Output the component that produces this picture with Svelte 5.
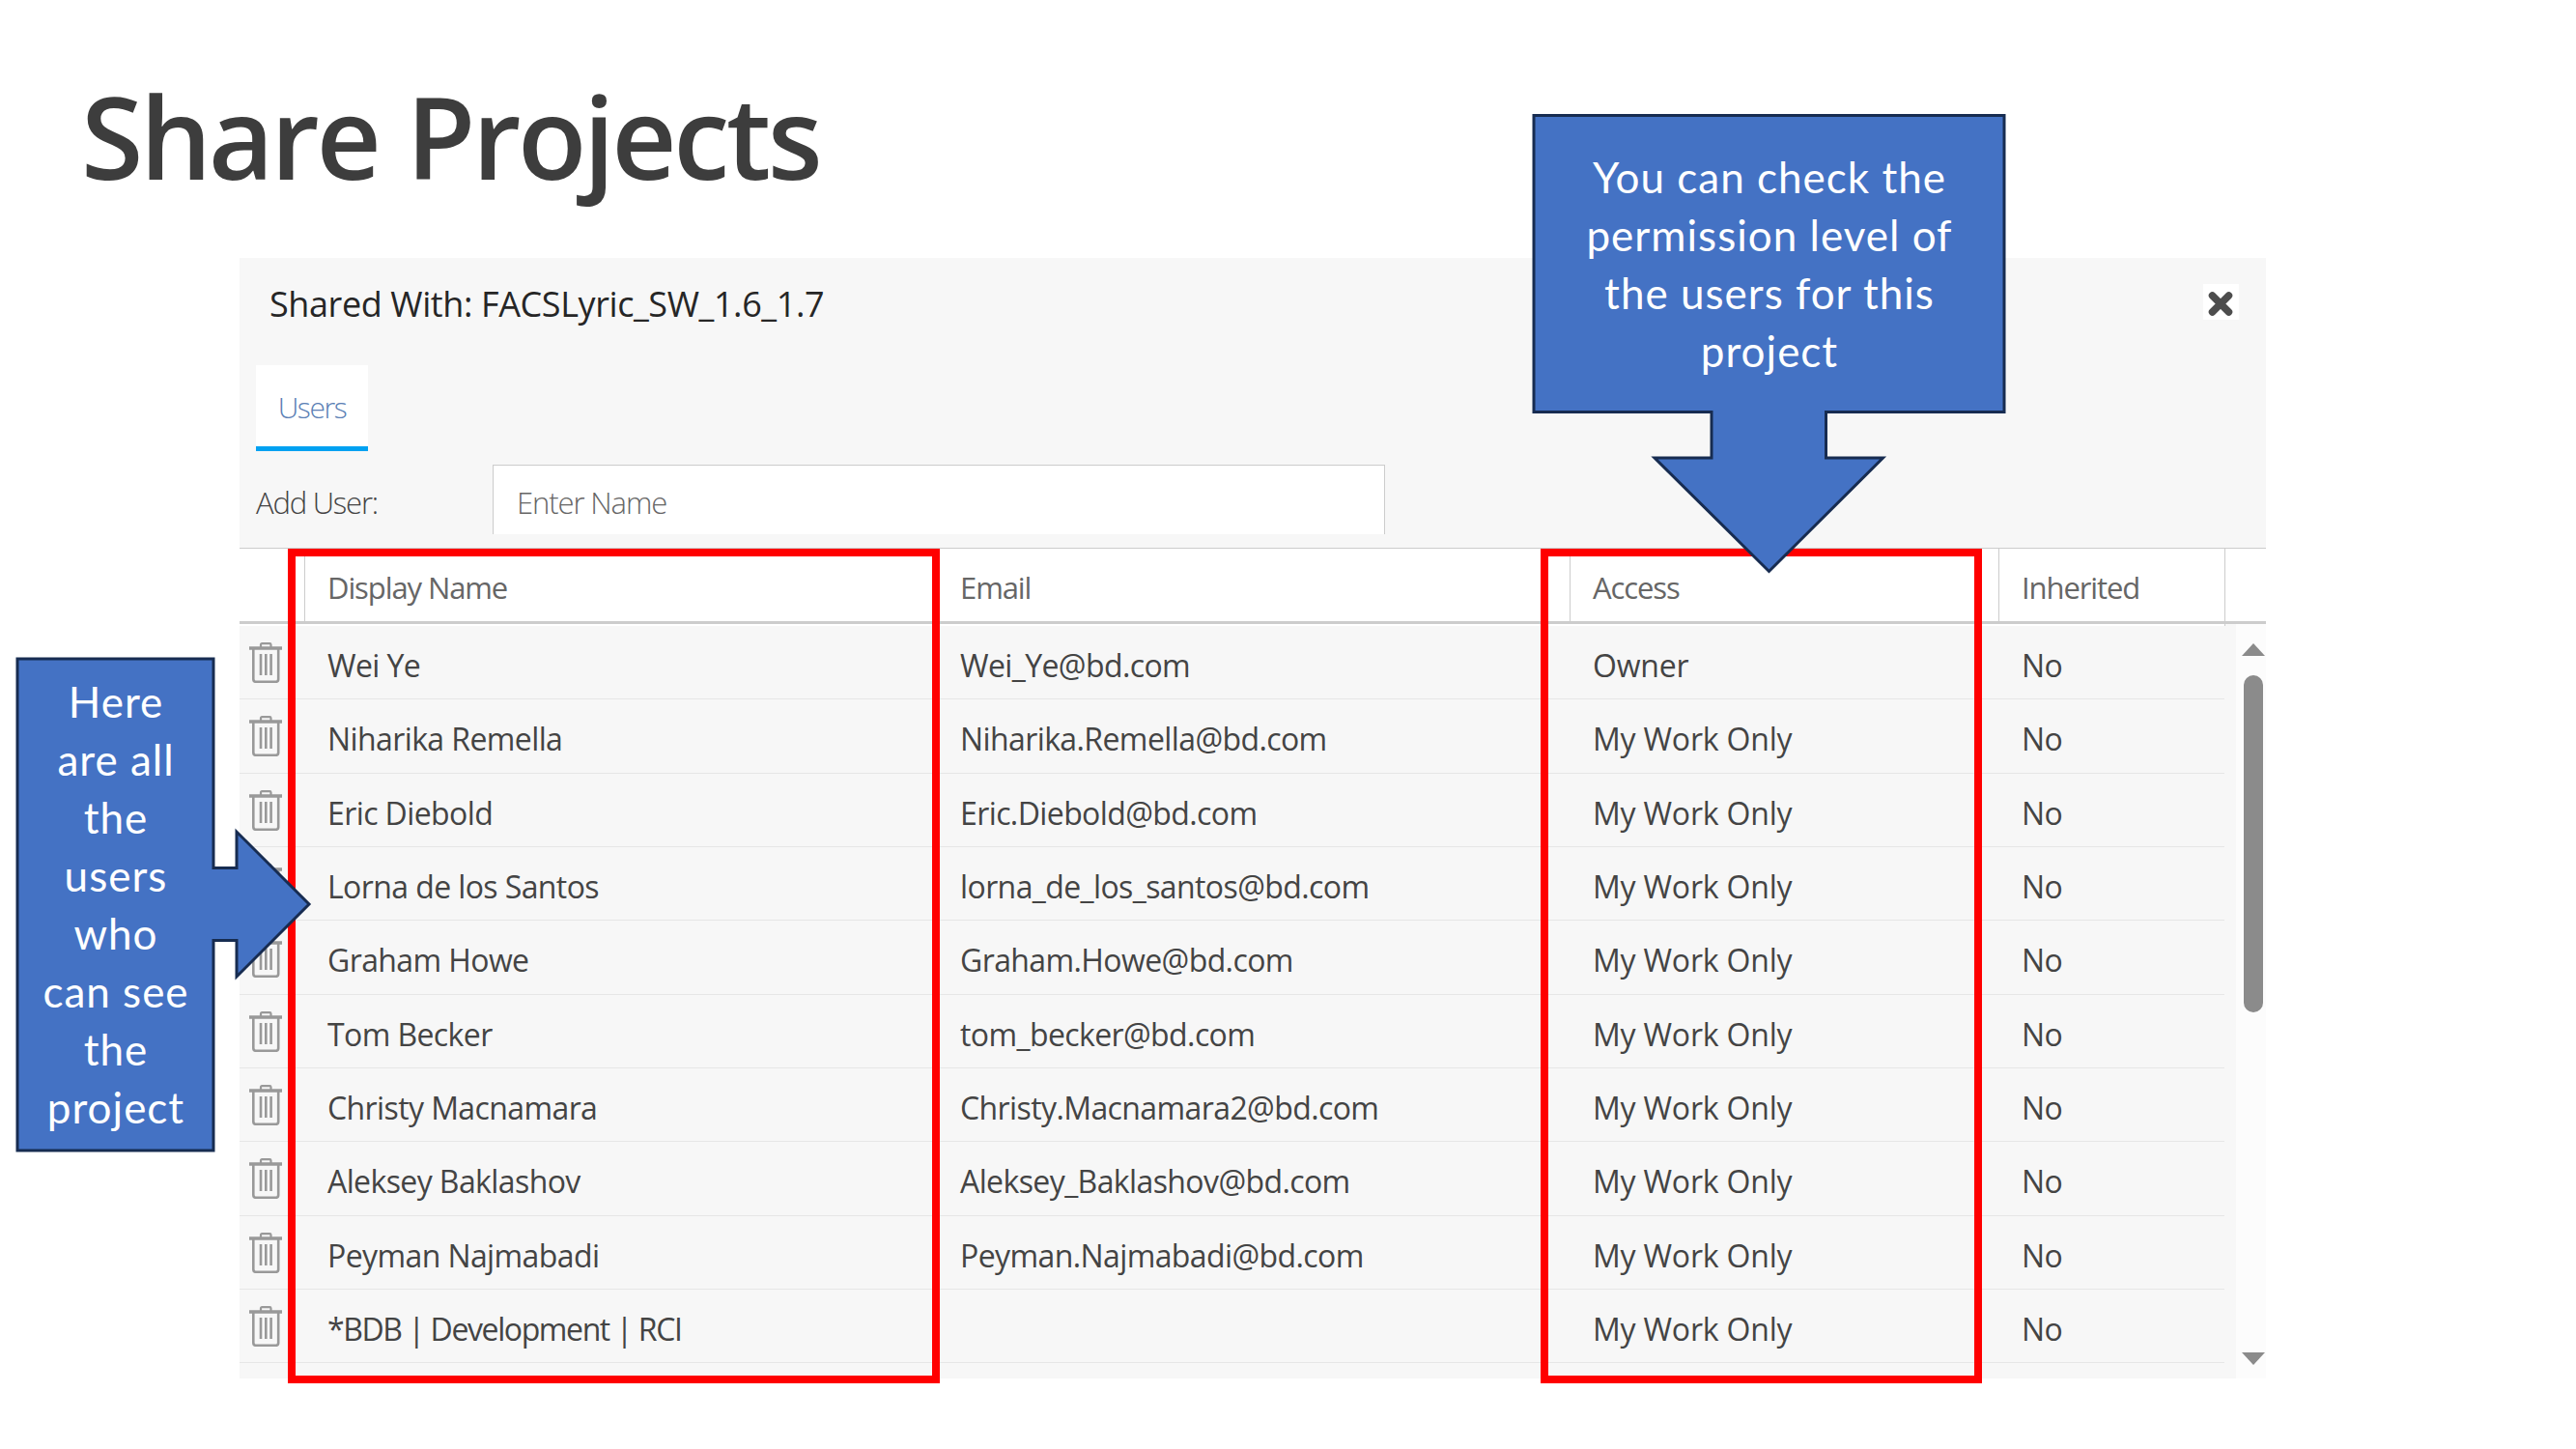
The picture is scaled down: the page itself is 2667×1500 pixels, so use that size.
<script lang="ts">
  type User = { name: string; email: string; access: string; inherited: string; group?: boolean };

  const users: User[] = [
    { name: 'Wei Ye', email: 'Wei_Ye@bd.com', access: 'Owner', inherited: 'No' },
    { name: 'Niharika Remella', email: 'Niharika.Remella@bd.com', access: 'My Work Only', inherited: 'No' },
    { name: 'Eric Diebold', email: 'Eric.Diebold@bd.com', access: 'My Work Only', inherited: 'No' },
    { name: 'Lorna de los Santos', email: 'lorna_de_los_santos@bd.com', access: 'My Work Only', inherited: 'No' },
    { name: 'Graham Howe', email: 'Graham.Howe@bd.com', access: 'My Work Only', inherited: 'No' },
    { name: 'Tom Becker', email: 'tom_becker@bd.com', access: 'My Work Only', inherited: 'No' },
    { name: 'Christy Macnamara', email: 'Christy.Macnamara2@bd.com', access: 'My Work Only', inherited: 'No' },
    { name: 'Aleksey Baklashov', email: 'Aleksey_Baklashov@bd.com', access: 'My Work Only', inherited: 'No' },
    { name: 'Peyman Najmabadi', email: 'Peyman.Najmabadi@bd.com', access: 'My Work Only', inherited: 'No' },
    { name: '*BDB | Development | RCI', email: '', access: 'My Work Only', inherited: 'No', group: true }
  ];
</script>

<div class="slide">
  <h1>Share Projects</h1>

  <section class="dialog">
    <header class="dialog-header">
      <h2>Shared With: FACSLyric_SW_1.6_1.7</h2>
      <button class="close" aria-label="Close">
        <svg viewBox="0 0 37 37" width="37" height="37">
          <path d="M9.5 12 L26.5 29 M26.5 12 L9.5 29" stroke="#4d4d4d" stroke-width="7.5" stroke-linecap="round" />
        </svg>
      </button>
    </header>

    <nav class="tabs">
      <button class="tab">Users</button>
    </nav>

    <div class="add-user">
      <label for="add-user">Add User:</label>
      <input id="add-user" type="text" placeholder="Enter Name" />
    </div>

    <div class="grid-head">
      <span></span>
      <span class="cell first">Display Name</span>
      <span class="cell">Email</span>
      <span class="cell line">Access</span>
      <span class="cell line">Inherited</span>
      <span class="line"></span>
    </div>

    <div class="grid-body">
      <div class="rows">
        {#each users as user}
          <div class="row">
            <span class="trash">
              <svg viewBox="0 0 34 42" width="34" height="42" fill="none" stroke="#999">
                <path d="M12 5 V2.5 Q12 1.2 13.3 1.2 H21.2 Q22.5 1.2 22.5 2.5 V5" stroke-width="2.2" />
                <path d="M0 6 H34" stroke-width="3.4" />
                <path d="M4.3 7 V38 Q4.3 40.8 7 40.8 H27.5 Q30.2 40.8 30.2 38 V7" stroke-width="2.6" />
                <path d="M12 12 V34 M17.3 12 V34 M22.6 12 V34" stroke-width="2.6" />
              </svg>
            </span>
            <span class="cell" class:group={user.group}>{user.name}</span>
            <span class="cell email">{user.email}</span>
            <span class="cell access">{user.access}</span>
            <span class="cell">{user.inherited}</span>
          </div>
        {/each}
      </div>
      <div class="scrollbar">
        <svg width="24" height="13" viewBox="0 0 24 13"><path d="M12 0 L24 13 H0 Z" fill="#8b8b8b" /></svg>
        <div class="thumb"></div>
        <svg class="end" width="24" height="13" viewBox="0 0 24 13"><path d="M12 13 L24 0 H0 Z" fill="#8b8b8b" /></svg>
      </div>
    </div>
  </section>

  <!-- highlighted columns -->
  <div class="highlight names"></div>
  <div class="highlight levels"></div>

  <div class="callout right">
    <svg width="310" height="516" viewBox="0 0 310 516">
      <path d="M2 2 H205 V218.500 H229 V181 L304 256 L229 331 V293.500 H205 V511 H2 Z" />
    </svg>
    <p>Here<br />are all<br />the<br />users<br />who<br />can see<br />the<br />project</p>
  </div>

  <div class="callout down">
    <svg width="492" height="480" viewBox="0 0 492 480">
      <path d="M2 2.500 H489 V309.500 H304.500 V357 H363.500 L245.500 474.500 L127 357 H186 V309.500 H2 Z" />
    </svg>
    <p>You can check the<br />permission level of<br />the users for this<br />project</p>
  </div>
</div>

<style>
  :global(body) { background: #fff; }

  .slide {
    position: relative;
    width: 2667px;
    height: 1500px;
    overflow: hidden;
    background: #fff;
    font-family: 'Open Sans', 'Noto Sans', sans-serif;
    color: #444;
  }

  h1 {
    margin: 0;
    padding: 61px 0 0 84px;
    height: 206px;
    font-size: 117px;
    line-height: 160px;
    font-weight: 600;
    letter-spacing: -3.4px;
    word-spacing: 2px;
    color: #3d3d3d;
  }

  .dialog {
    margin-left: 248px;
    width: 2098px;
    height: 1160px;
    background: #f7f7f7;
    display: flex;
    flex-direction: column;
    overflow: hidden;
  }

  .dialog-header {
    height: 111px;
    display: flex;
    justify-content: space-between;
    align-items: flex-start;
    padding: 27px 28px 0 31px;
    box-sizing: border-box;
  }
  h2 {
    margin: -5px 0 0;
    font-size: 36px;
    line-height: 52px;
    font-weight: 400;
    letter-spacing: -0.4px;
    color: #262626;
  }
  .close {
    border: 0;
    padding: 0;
    width: 37px;
    height: 37px;
    background: #fff;
  }
  .close svg { display: block; }

  .tabs { padding-left: 17px; height: 103px; }
  .tab {
    width: 116px;
    height: 89px;
    padding: 2px 0 0;
    border: 0;
    border-bottom: 5px solid #00a1f1;
    background: #fff;
    font: 300 30px 'Open Sans', sans-serif;
    letter-spacing: -1.4px;
    color: #5b7fb5;
  }

  .add-user {
    display: flex;
    height: 86px;
    padding-left: 17px;
    font-size: 31px;
    font-weight: 300;
    letter-spacing: -1.2px;
  }
  label { width: 245px; line-height: 78px; }
  input {
    width: 924px;
    height: 72px;
    padding: 4px 24px 0;
    box-sizing: border-box;
    border: 1.5px solid #ccc;
    border-bottom: 0;
    border-radius: 0;
    background: #fff;
    font: inherit;
    letter-spacing: -1.1px;
  }
  input::placeholder { color: #666; opacity: 1; }

  .grid-head, .row {
    display: grid;
    grid-template-columns: 67px 655px 655px 444px 234px 1fr;
  }
  .grid-head {
    flex: none;
    height: 79px;
    box-sizing: border-box;
    border-top: 1px solid #ccc;
    border-bottom: 3px solid #ccc;
    background: #fff;
    line-height: 80px;
    font-size: 31px;
    letter-spacing: -1.1px;
    color: #666;
  }
  .cell { padding-left: 24px; white-space: nowrap; }
  .first, .line { border-left: 1px solid #ccc; }
  .grid-head .cell { padding-left: 23px; }
  .grid-head .cell:nth-child(3) { padding-left: 24px; }

  .grid-body { display: flex; flex: 1; min-height: 0; }
  .rows { width: 2055px; border-top: 2px solid #fff; }
  .row {
    height: 76.35px;
    box-sizing: border-box;
    border-bottom: 1.5px solid #e6e6e6;
    font-size: 32px;
    line-height: 81px;
    letter-spacing: -0.6px;
  }
  .email { letter-spacing: -0.6px; }
  .access { letter-spacing: -0.2px; }
  .group { letter-spacing: -1.4px; }
  .trash { padding: 17px 0 0 10px; line-height: 0; }

  .scrollbar {
    margin-left: 12px;
    width: 31px;
    box-sizing: border-box;
    padding: 20px 1px 14px 6px;
    background: #fcfcfc;
    display: flex;
    flex-direction: column;
  }
  .thumb {
    width: 20px;
    height: 349px;
    margin: 20px 0 0 2px;
    border-radius: 10px;
    background: #8b8b8b;
  }
  .end { margin-top: auto; }

  .highlight {
    position: absolute;
    top: 568px;
    height: 864px;
    box-sizing: border-box;
    border: 8px solid #f00;
  }
  .names { left: 298px; width: 675px; }
  .levels { left: 1595px; width: 457px; }

  .callout { position: absolute; }
  .callout svg { position: absolute; }
  .callout path { fill: #4472c4; stroke: #172c51; stroke-width: 3; }
  .callout p {
    position: relative;
    margin: 0;
    font-family: Lato, 'Open Sans', sans-serif;
    font-size: 44px;
    line-height: 60px;
    letter-spacing: 1px;
    text-align: center;
    color: #fff;
  }
  .right { left: 16px; top: 680px; }
  .right p { width: 208px; padding-top: 16px; }
  .down { left: 1586px; top: 117px; }
  .down p { width: 492px; padding-top: 36px; }
</style>
